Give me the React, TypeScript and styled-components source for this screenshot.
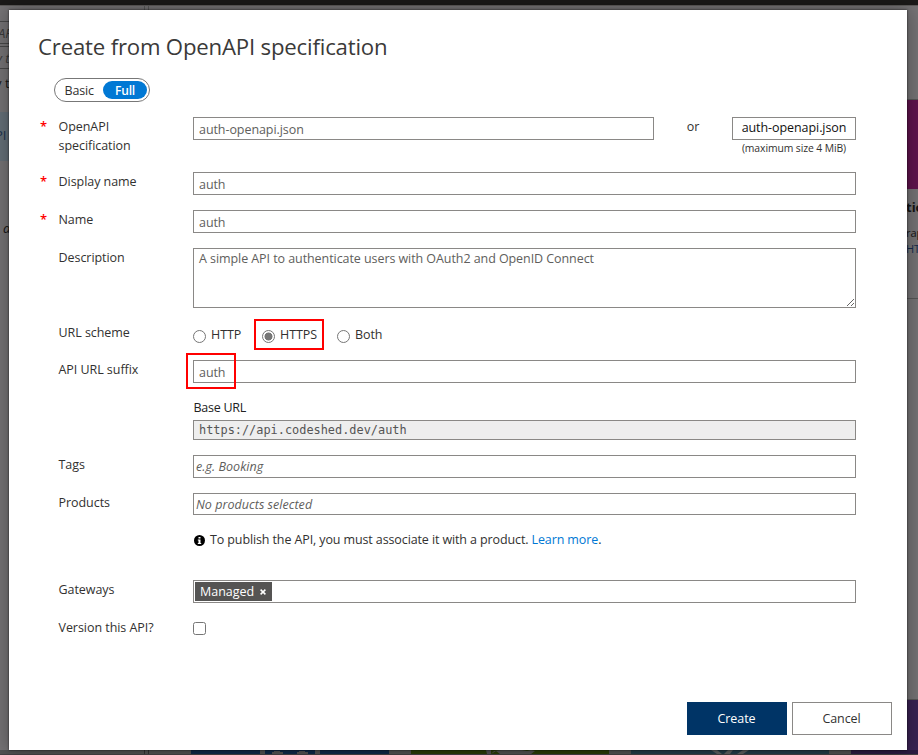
import React from 'react';
import styled, { createGlobalStyle, css } from 'styled-components';

const GlobalStyle = createGlobalStyle`
  * { box-sizing: border-box; }
  body { margin: 0; overflow: hidden; background: #777; }
`;

const Page = styled.div`
  position: relative;
  width: 918px;
  height: 755px;
  overflow: hidden;
  display: flex;
  flex-direction: column;
  background: #797779;
  color: #161616;
  font: 13px/19px 'Open Sans', 'Noto Sans', sans-serif;
`;

const TopBar = styled.div`
  flex: none;
  height: 6px;
  background: #1b1a19;
  border-bottom: 1px solid #5f5d5c;
`;

const Portal = styled.div`
  flex: 1;
  display: flex;
`;

const SidePane = styled.div`
  width: 144px;
  display: flex;
  flex-direction: column;
  overflow: hidden;
  white-space: nowrap;
`;

const Divider = styled.div`
  width: 5px;
  margin-right: auto;
  border: solid #5c5c5c;
  border-width: 0 1px;
`;

const FilterBox = styled.div<{ $top: number; $shift: number }>`
  height: 23px;
  margin-top: ${p => p.$top}px;
  line-height: 23px;
  border: solid #4b4b4b;
  border-width: 1px 0;
  font-style: italic;
  color: #3b3b3b;
  text-indent: ${p => p.$shift}px;
`;

const PaneText = styled.div<{ $top: number; $indent: number; $italic?: boolean }>`
  margin-top: ${p => p.$top}px;
  text-indent: ${p => p.$indent}px;
  font-style: ${p => (p.$italic ? 'italic' : 'normal')};
`;

const SelectedItem = styled.div`
  height: 49px;
  margin-top: 19px;
  padding-top: 14px;
  background: #68737c;
  color: #1d3350;
  text-indent: -5px;
`;

const RightCard = styled.div`
  width: 11px;
  display: flex;
  flex-direction: column;
  overflow: hidden;
  white-space: nowrap;
`;

const CardBand = styled.div<{ $top: number; $height: number; $color: string }>`
  flex: none;
  margin-top: ${p => p.$top}px;
  height: ${p => p.$height}px;
  border-top: 1px solid #595959;
  background: ${p => p.$color};
`;

const CardText = styled.div<{ $link?: boolean; $bold?: boolean; $size: number }>`
  line-height: ${p => (p.$bold ? 36 : 16)}px;
  font-size: ${p => p.$size}px;
  font-weight: ${p => (p.$bold ? 700 : 400)};
  color: ${p => (p.$link ? '#152b50' : '#151515')};
  text-indent: -1px;
`;

const CardEdge = styled.div`
  flex: none;
  margin-top: 41px;
  height: 1px;
  background: #595959;
`;

const BottomTiles = styled.svg`
  position: absolute;
  left: 0;
  bottom: 0;
`;

const Dialog = styled.main`
  position: absolute;
  left: 9px;
  top: 10px;
  width: 898px;
  height: 740px;
  display: flex;
  flex-direction: column;
  background: #fff;
  color: #323130;
  box-shadow: 0 0 2px rgba(0, 0, 0, 0.75), 0 0 20px 4px rgba(0, 0, 0, 0.3);
  font-size: 12.5px;
`;

const Title = styled.h1`
  margin: 19px 0 0 29px;
  height: 36px;
  font-size: 22.2px;
  line-height: 36px;
  font-weight: 400;
  color: #3b3a39;
  letter-spacing: -0.19px;
`;

const Toggle = styled.div`
  display: flex;
  align-items: center;
  width: 96px;
  height: 24px;
  margin: 13px 0 0 45px;
  padding: 0 2px 0 9.5px;
  border: 1px solid #777;
  border-radius: 12px;
  justify-content: space-between;
  letter-spacing: -0.15px;
`;

const ToggleActive = styled.span`
  width: 44px;
  height: 18px;
  border-radius: 9px;
  line-height: 19px;
  text-align: center;
  background: #0078d4;
  color: #fff;
  font-weight: 600;
  font-size: 12px;
`;

const Form = styled.form`
  display: flex;
  flex-direction: column;
  margin-top: 15px;
`;

const Row = styled.div<{ $height: number }>`
  display: grid;
  grid-template-columns: 18px 135px 663px;
  height: ${p => p.$height}px;
  padding-left: 31px;
  align-items: start;
`;

const Star = styled.span`
  color: #f00;
  font-weight: 600;
  font-size: 13px;
  line-height: 19px;
`;

const Label = styled.label`
  width: 100px;
  padding-left: 0.5px;
  letter-spacing: -0.05px;
`;

const field = css`
  border: 1px solid #8a8886;
  background: #fff;
  color: #605e5c;
  font: 12.5px/19px 'Open Sans', 'Noto Sans', sans-serif;
  border-radius: 0;
  outline: none;
  margin: 0;
  letter-spacing: -0.07px;
`;

const Input = styled.input<{ $height?: number }>`
  ${field}
  display: block;
  width: 100%;
  height: ${p => p.$height ?? 23}px;
  padding: 1px 5px 0;
`;

const PickerInput = styled(Input)`
  padding: 0 2px;
  letter-spacing: 0.04px;
  &::placeholder { color: #605e5c; font-style: italic; opacity: 1; }
`;

const TextArea = styled.textarea`
  ${field}
  display: block;
  width: 663px;
  height: 60px;
  padding: 0 5px;
  resize: both;
`;

const FileLine = styled.div`
  display: grid;
  grid-template-columns: 461px 78px 124px;
  text-align: center;
`;

const FileButton = styled.button`
  ${field}
  height: 23px;
  width: 124px;
  padding: 0 0 2px;
  color: #111;
`;

const Hint = styled.small`
  display: block;
  font-size: 10.4px;
  line-height: 16px;
  letter-spacing: -0.1px;
`;

const Radios = styled.div`
  display: flex;
  align-items: center;
  height: 23px;
`;

const Radio = styled.label<{ $width: number }>`
  display: flex;
  align-items: center;
  width: ${p => p.$width}px;
  letter-spacing: -0.07px;
`;

const RadioMark = styled.span<{ $on?: boolean }>`
  width: 13px;
  height: 13px;
  margin: 4px 5px 0 0;
  flex: none;
  border: 1px solid #767676;
  border-radius: 50%;
  background: ${p => (p.$on ? 'radial-gradient(circle, #767676 0 3.7px, #fff 4.3px)' : '#fff')};
`;

const BaseLabel = styled.div`
  margin-top: 15px;
  height: 22px;
  padding-left: 0.5px;
  color: #222;
  letter-spacing: -0.25px;
`;

const BaseUrl = styled.div`
  height: 20px;
  padding: 0 5px;
  border: 1px solid #8a8886;
  background: #eee;
  color: #555;
  font: 11.9px/18px 'DejaVu Sans Mono', monospace;
`;

const Note = styled.p`
  display: flex;
  align-items: center;
  margin: 15px 0 0;
  height: 19px;
  padding-left: 1px;
  white-space: pre;
  letter-spacing: -0.115px;
  svg { margin: 2px 5px 0 0; flex: none; }
`;

const Link = styled.a`
  color: #0078d4;
`;

const TagField = styled.div`
  height: 23px;
  padding: 1px;
  border: 1px solid #8a8886;
`;

const Tag = styled.span`
  display: flex;
  align-items: center;
  justify-content: space-between;
  width: 77px;
  height: 19px;
  padding: 0 6px 0 5px;
  background: #555453;
  color: #fff;
`;

const CheckBox = styled.span`
  width: 13px;
  height: 13px;
  margin-top: 4px;
  border: 1px solid #767676;
  border-radius: 2.5px;
`;

const Actions = styled.footer`
  display: flex;
  justify-content: flex-end;
  gap: 5px;
  margin: auto 15px 15px 0;
`;

const Action = styled.button<{ $primary?: boolean }>`
  width: 100px;
  height: 33px;
  padding: 0 1px 0 0;
  border: 1px solid ${p => (p.$primary ? '#003466' : '#8a8886')};
  background: ${p => (p.$primary ? '#003466' : '#fff')};
  color: ${p => (p.$primary ? '#fff' : '#323130')};
  font: 12.5px/19px 'Open Sans', 'Noto Sans', sans-serif;
  letter-spacing: -0.1px;
`;

const Highlight = styled.div<{ $x: number; $y: number; $w: number; $h: number }>`
  position: absolute;
  left: ${p => p.$x}px;
  top: ${p => p.$y}px;
  width: ${p => p.$w}px;
  height: ${p => p.$h}px;
  border: 2px solid #f00;
  pointer-events: none;
`;

export default function App() {
  return (
    <>
      <GlobalStyle />
      <Page>
        <TopBar />
        <Portal>
          <SidePane>
            <FilterBox $top={15} $shift={-2}>AP</FilterBox>
            <FilterBox $top={2} $shift={-4}>y t</FilterBox>
            <PaneText $top={5} $indent={-5}>y t</PaneText>
            <SelectedItem>PI</SelectedItem>
            <PaneText $top={58} $indent={3} $italic>a</PaneText>
          </SidePane>
          <Divider />
          <RightCard>
            <CardBand $top={93} $height={90} $color="#631550" />
            <CardText $bold $size={13}>tio</CardText>
            <CardText $size={11}>rap</CardText>
            <CardText $size={11} $link>HTT</CardText>
            <CardEdge />
            <CardBand $top={400} $height={55} $color="#3c2456" />
          </RightCard>
        </Portal>
        <BottomTiles width="918" height="5" viewBox="0 0 918 5">
          <rect width="918" height="5" fill="#555" />
          <path d="M144.500 0v4M148.500 0v4" stroke="#333" />
          <path d="M191 0h198v4H191z" fill="#0f2b4b" />
          <path d="M260 0h5v4h-5zM315 0h5v4h-5zM274 1h6v1h3v2h-11V2h2zM299 1h6v1h3v2h-11V2h2z" fill="#555" />
          <path d="M411 0h198v4H411z" fill="#2b4007" />
          <path d="M486 0h5v4h-4zM491 4l5-3 4 3h31l4-3-4-1-4 1-5-1h-21l-7 1z" fill="#555" />
          <path d="M631 0h198v4H631z" fill="#243f4b" />
          <path d="M711 0h6l5 4h-5zM728 0h5l-3 4h-6zM743 0h6l-6 4h-6z" fill="#606464" />
          <path d="M851 0h67v4h-67z" fill="#2e1d45" />
          <path d="M0 4h918v1H0z" fill="#484346" />
        </BottomTiles>

        <Dialog>
          <Title>Create from OpenAPI specification</Title>
          <Toggle>
            <span>Basic</span>
            <ToggleActive>Full</ToggleActive>
          </Toggle>
          <Form>
            <Row $height={55}>
              <Star>*</Star>
              <Label>OpenAPI specification</Label>
              <FileLine>
                <Input readOnly value="auth-openapi.json" />
                <span>or</span>
                <div>
                  <FileButton type="button">auth-openapi.json</FileButton>
                  <Hint>(maximum size 4 MiB)</Hint>
                </div>
              </FileLine>
            </Row>
            <Row $height={38}>
              <Star>*</Star>
              <Label>Display name</Label>
              <Input readOnly value="auth" />
            </Row>
            <Row $height={38}>
              <Star>*</Star>
              <Label>Name</Label>
              <Input readOnly value="auth" />
            </Row>
            <Row $height={75}>
              <span />
              <Label>Description</Label>
              <TextArea readOnly value="A simple API to authenticate users with OAuth2 and OpenID Connect" />
            </Row>
            <Row $height={37}>
              <span />
              <Label>URL scheme</Label>
              <Radios>
                <Radio $width={69}><RadioMark />HTTP</Radio>
                <Radio $width={75}><RadioMark $on />HTTPS</Radio>
                <Radio $width={60}><RadioMark />Both</Radio>
              </Radios>
            </Row>
            <Row $height={95}>
              <span />
              <Label>API URL suffix</Label>
              <div>
                <Input readOnly value="auth" />
                <BaseLabel>Base URL</BaseLabel>
                <BaseUrl>https://api.codeshed.dev/auth</BaseUrl>
              </div>
            </Row>
            <Row $height={38}>
              <span />
              <Label>Tags</Label>
              <PickerInput placeholder="e.g. Booking" />
            </Row>
            <Row $height={87}>
              <span />
              <Label>Products</Label>
              <div>
                <PickerInput $height={22} placeholder="No products selected" />
                <Note>
                  <svg width="11" height="11" viewBox="0 0 11 11">
                    <circle cx="5.500" cy="5.500" r="5.500" fill="#000" />
                    <path d="M4.500 2h2v1.500h-2zM3.800 4.500h2.700v3.500h.7v1H3.800V8h.7V5.500h-.7z" fill="#fff" />
                  </svg>
                  To publish the API, you must associate it with a product. <Link>Learn more</Link>.
                </Note>
              </div>
            </Row>
            <Row $height={38}>
              <span />
              <Label>Gateways</Label>
              <TagField>
                <Tag>
                  Managed
                  <svg width="6" height="6" viewBox="0 0 6 6">
                    <path d="M.6.6l4.800 4.800M5.400.6L.6 5.400" stroke="#fff" strokeWidth="1.500" />
                  </svg>
                </Tag>
              </TagField>
            </Row>
            <Row $height={30}>
              <span />
              <Label>Version this API?</Label>
              <CheckBox role="checkbox" aria-checked="false" />
            </Row>
          </Form>
          <Actions>
            <Action $primary>Create</Action>
            <Action>Cancel</Action>
          </Actions>
          <Highlight $x={245} $y={309} $w={70} $h={31} />
          <Highlight $x={177} $y={343} $w={50} $h={36} />
        </Dialog>
      </Page>
    </>
  );
}
